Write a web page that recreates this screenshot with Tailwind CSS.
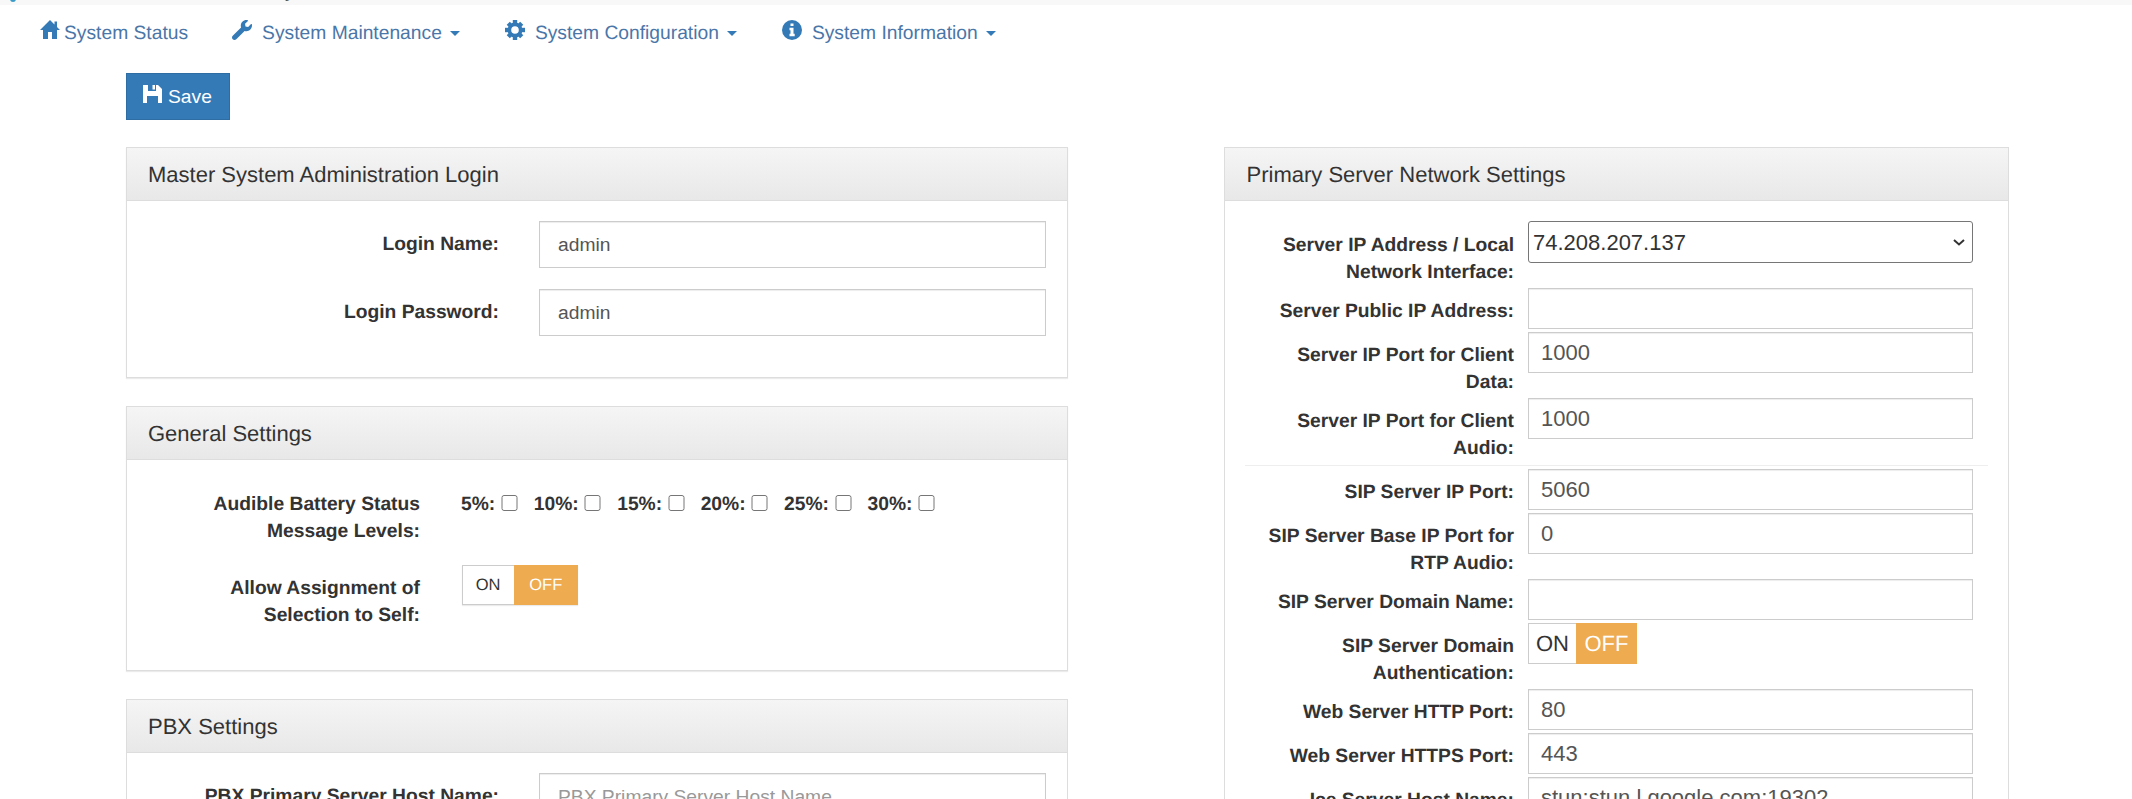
<!DOCTYPE html>
<html lang="en">
<head>
    <meta charset="UTF-8">
    <title>System Configuration</title>
    <script src="https://cdn.jsdelivr.net/npm/@tailwindcss/browser@4"></script>
</head>
<body class="h-screen overflow-hidden bg-white font-['Liberation_Sans',Arial,sans-serif] text-[19.25px] text-[#333] [text-rendering:geometricPrecision]">
    <!-- clipped top bar -->
    <div class="flex h-[5px] overflow-hidden bg-[#f8f8f8]">
        <span class="mt-[-5px] ml-[10px] h-[7px] w-[6px] rounded-full bg-[#3a9bc8]"></span>
        <span class="ml-[269px] mt-[-22px] leading-[27px] text-[#555]">y</span>
    </div>

    <!-- nav -->
    <nav class="flex h-[56px] items-center pl-[40px] text-[#4a76a8]">
        <a class="flex items-center">
            <svg class="mt-[-7px] h-[20px] w-[20px] fill-[#337ab7]" viewBox="0 0 20 20"><path d="M10 0 14.5 4.5V1.5H17V7L20 10H17V19H12V12H8V19H3V10H0Z"/></svg>
            <span class="mt-[2px] ml-[4px]">System Status</span>
        </a>
        <a class="ml-[44px] flex items-center">
            <svg class="mt-[-7px] h-[20px] w-[20px] fill-[#337ab7]" viewBox="0 0 512 512"><path d="M507.73 109.1c-2.24-9.03-13.54-12.09-20.12-5.51l-74.36 74.36-67.88-11.31-11.31-67.88 74.36-74.36c6.62-6.62 3.43-17.9-5.66-20.16-47.38-11.74-99.55.91-136.58 37.93-39.64 39.64-50.55 97.1-34.05 147.2L18.74 402.76c-24.99 24.99-24.99 65.51 0 90.5 24.99 24.99 65.51 24.99 90.5 0l213.21-213.21c50.12 16.71 107.47 5.68 147.37-34.22 37.07-37.07 49.7-89.32 37.91-136.73z"/></svg>
            <span class="mt-[2px] ml-[10px]">System Maintenance</span>
            <span class="ml-[8px] h-0 w-0 border-x-[5px] border-t-[5px] border-x-transparent border-t-[#337ab7]"></span>
        </a>
        <a class="ml-[45px] flex items-center">
            <svg class="mt-[-7px] h-[20px] w-[20px]" viewBox="0 0 20 20">
                <circle cx="10" cy="10" r="5.6" fill="none" stroke="#337ab7" stroke-width="3.6"/>
                <g fill="#337ab7">
                    <rect x="7.8" y="0" width="4.4" height="4"/><rect x="7.8" y="16" width="4.4" height="4"/>
                    <rect x="0" y="7.8" width="4" height="4.4"/><rect x="16" y="7.8" width="4" height="4.4"/>
                    <rect x="7.8" y="0.5" width="4.4" height="4" transform="rotate(45 10 10)"/><rect x="7.8" y="15.5" width="4.4" height="4" transform="rotate(45 10 10)"/>
                    <rect x="0.5" y="7.8" width="4" height="4.4" transform="rotate(45 10 10)"/><rect x="15.5" y="7.8" width="4" height="4.4" transform="rotate(45 10 10)"/>
                </g>
            </svg>
            <span class="mt-[2px] ml-[10px]">System Configuration</span>
            <span class="ml-[8px] h-0 w-0 border-x-[5px] border-t-[5px] border-x-transparent border-t-[#337ab7]"></span>
        </a>
        <a class="ml-[45px] flex items-center">
            <svg class="mt-[-7px] h-[20px] w-[20px]" viewBox="0 0 20 20">
                <circle cx="10" cy="10" r="10" fill="#337ab7"/>
                <path fill="#fff" d="M8.5 3.5h3v2.6h-3zM7.5 7.8h4v6h1.2v2.4H7.5v-2.4h1v-3.6h-1z"/>
            </svg>
            <span class="mt-[2px] ml-[10px]">System Information</span>
            <span class="ml-[8px] h-0 w-0 border-x-[5px] border-t-[5px] border-x-transparent border-t-[#337ab7]"></span>
        </a>
    </nav>

    <div class="pl-[126px]">
        <button class="mt-[12px] mb-[27px] flex h-[47px] w-[104px] items-center border border-[#2e6da4] bg-[#337ab7] pl-[16px] text-white">
            <svg class="mt-[-6px] h-[18px] w-[19px] fill-white" viewBox="0 0 19 18"><path fill-rule="evenodd" d="M0 0H5V6H13V0H15L19 4V18H0ZM4 11V18H15V11ZM9.5 0H12V4.5H9.5Z"/></svg>
            <span class="mt-[1px] ml-[6px]">Save</span>
        </button>

        <div class="flex items-start gap-[156px]">
            <!-- left column -->
            <div class="w-[942px]">
                <section class="mb-[28px] border border-[#ddd] shadow-[0_1px_1px_rgba(0,0,0,0.08)]">
                    <h3 class="flex h-[53px] items-center border-b border-[#ddd] bg-linear-to-b from-[#f5f5f5] to-[#e8e8e8] pl-[21px] text-[22px]">Master System Administration Login</h3>
                    <div class="px-[21px] pt-[20px] pb-[41px]">
                        <div class="mb-[21px] flex">
                            <label class="w-[351px] pt-[10px] text-right leading-[27px] font-bold">Login Name:</label>
                            <input class="ml-[40px] h-[47px] w-[507px] border border-[#ccc] px-[18px] pt-[1px] text-[#555] shadow-[inset_0_1px_1px_rgba(0,0,0,0.075)]" value="admin">
                        </div>
                        <div class="flex">
                            <label class="w-[351px] pt-[10px] text-right leading-[27px] font-bold">Login Password:</label>
                            <input class="ml-[40px] h-[47px] w-[507px] border border-[#ccc] px-[18px] pt-[1px] text-[#555] shadow-[inset_0_1px_1px_rgba(0,0,0,0.075)]" value="admin">
                        </div>
                    </div>
                </section>

                <section class="mb-[28px] border border-[#ddd] shadow-[0_1px_1px_rgba(0,0,0,0.08)]">
                    <h3 class="flex h-[53px] items-center border-b border-[#ddd] bg-linear-to-b from-[#f5f5f5] to-[#e8e8e8] pl-[21px] text-[22px]">General Settings</h3>
                    <div class="pt-[31px] pb-[41px] pl-[21px]">
                        <div class="mb-[20px] flex">
                            <label class="w-[272px] text-right leading-[27px] font-bold">Audible Battery Status Message Levels:</label>
                            <div class="ml-[41px] flex leading-[27px] font-bold">
                                <label class="flex items-start">5%:<input type="checkbox" class="mt-[4px] ml-[5.5px] h-[16px] w-[17px]"></label>
                                <label class="ml-[16px] flex items-start">10%:<input type="checkbox" class="mt-[4px] ml-[5.5px] h-[16px] w-[17px]"></label>
                                <label class="ml-[16px] flex items-start">15%:<input type="checkbox" class="mt-[4px] ml-[5.5px] h-[16px] w-[17px]"></label>
                                <label class="ml-[16px] flex items-start">20%:<input type="checkbox" class="mt-[4px] ml-[5.5px] h-[16px] w-[17px]"></label>
                                <label class="ml-[16px] flex items-start">25%:<input type="checkbox" class="mt-[4px] ml-[5.5px] h-[16px] w-[17px]"></label>
                                <label class="ml-[16px] flex items-start">30%:<input type="checkbox" class="mt-[4px] ml-[5.5px] h-[16px] w-[17px]"></label>
                            </div>
                        </div>
                        <div class="flex">
                            <label class="w-[272px] pt-[10px] text-right leading-[27px] font-bold">Allow Assignment of Selection to Self:</label>
                            <div class="ml-[41.5px] flex h-[40px] text-[16.5px] shadow-[0_1px_1px_rgba(0,0,0,0.08)]">
                                <span class="flex w-[52px] items-center justify-center border border-r-0 border-[#ccc] bg-white">ON</span>
                                <span class="flex w-[64.5px] items-center justify-center bg-[#eeab4f] text-white">OFF</span>
                            </div>
                        </div>
                    </div>
                </section>

                <section class="border border-[#ddd]">
                    <h3 class="flex h-[53px] items-center border-b border-[#ddd] bg-linear-to-b from-[#f5f5f5] to-[#e8e8e8] pl-[21px] text-[22px]">PBX Settings</h3>
                    <div class="px-[21px] pt-[20px] pb-[41px]">
                        <div class="flex">
                            <label class="w-[351px] pt-[10px] text-right leading-[27px] font-bold">PBX Primary Server Host Name:</label>
                            <input class="ml-[40px] h-[47px] w-[507px] border border-[#ccc] px-[18px] pt-[1px] text-[#555] shadow-[inset_0_1px_1px_rgba(0,0,0,0.075)] placeholder:text-[#999]" placeholder="PBX Primary Server Host Name">
                        </div>
                    </div>
                </section>
            </div>

            <!-- right column -->
            <section class="w-[785px] border border-[#ddd]">
                <h3 class="flex h-[53px] items-center border-b border-[#ddd] bg-linear-to-b from-[#f5f5f5] to-[#e8e8e8] pl-[21.5px] text-[22px]">Primary Server Network Settings</h3>
                <div class="flex flex-col items-start gap-[3px] pt-[20px]">
                    <div class="flex">
                        <label class="mb-[-1px] w-[289px] pt-[11px] text-right leading-[27px] font-bold">Server IP Address / Local<br>Network Interface:</label>
                        <div class="relative ml-[14px] h-[42px] w-[445px]">
                            <select class="h-full w-full appearance-none rounded-[3px] border border-[#767676] pl-[4px] text-[22px] text-[#333]"><option>74.208.207.137</option></select>
                            <svg class="pointer-events-none absolute top-[18px] right-[8px] h-[7px] w-[12px]" viewBox="0 0 12 7"><path d="M1 1 6 5.5 11 1" fill="none" stroke="#333" stroke-width="2"/></svg>
                        </div>
                    </div>
                    <div class="flex items-start">
                        <label class="w-[289px] pt-[10px] text-right leading-[27px] font-bold">Server Public IP Address:</label>
                        <input class="ml-[14px] h-[41px] w-[445px] border border-[#ccc] px-[12px] pt-[1px] text-[22px] text-[#555] shadow-[inset_0_1px_1px_rgba(0,0,0,0.075)]">
                    </div>
                    <div class="flex items-start">
                        <label class="mb-[-1px] w-[289px] pt-[10px] text-right leading-[27px] font-bold">Server IP Port for Client<br>Data:</label>
                        <input class="ml-[14px] h-[41px] w-[445px] border border-[#ccc] px-[12px] pt-[1px] text-[22px] text-[#555] shadow-[inset_0_1px_1px_rgba(0,0,0,0.075)]" value="1000">
                    </div>
                    <div class="flex items-start">
                        <label class="mb-[-1px] w-[289px] pt-[10px] text-right leading-[27px] font-bold">Server IP Port for Client<br>Audio:</label>
                        <input class="ml-[14px] h-[41px] w-[445px] border border-[#ccc] px-[12px] pt-[1px] text-[22px] text-[#555] shadow-[inset_0_1px_1px_rgba(0,0,0,0.075)]" value="1000">
                    </div>
                    <hr class="mt-[1px] ml-[20px] w-[743px] border-[#eee]">
                    <div class="flex items-start">
                        <label class="w-[289px] pt-[10px] text-right leading-[27px] font-bold">SIP Server IP Port:</label>
                        <input class="ml-[14px] h-[41px] w-[445px] border border-[#ccc] px-[12px] pt-[1px] text-[22px] text-[#555] shadow-[inset_0_1px_1px_rgba(0,0,0,0.075)]" value="5060">
                    </div>
                    <div class="flex items-start">
                        <label class="mb-[-1px] w-[289px] pt-[10px] text-right leading-[27px] font-bold">SIP Server Base IP Port for<br>RTP Audio:</label>
                        <input class="ml-[14px] h-[41px] w-[445px] border border-[#ccc] px-[12px] pt-[1px] text-[22px] text-[#555] shadow-[inset_0_1px_1px_rgba(0,0,0,0.075)]" value="0">
                    </div>
                    <div class="flex items-start">
                        <label class="w-[289px] pt-[10px] text-right leading-[27px] font-bold">SIP Server Domain Name:</label>
                        <input class="ml-[14px] h-[41px] w-[445px] border border-[#ccc] px-[12px] pt-[1px] text-[22px] text-[#555] shadow-[inset_0_1px_1px_rgba(0,0,0,0.075)]">
                    </div>
                    <div class="flex items-start">
                        <label class="mb-[-1px] w-[289px] pt-[10px] text-right leading-[27px] font-bold">SIP Server Domain<br>Authentication:</label>
                        <div class="ml-[14px] flex h-[41px] text-[22px]">
                            <span class="flex w-[48px] items-center justify-center border border-r-0 border-[#ccc] bg-white">ON</span>
                            <span class="flex w-[61px] items-center justify-center bg-[#eeab4f] text-white">OFF</span>
                        </div>
                    </div>
                    <div class="flex items-start">
                        <label class="w-[289px] pt-[10px] text-right leading-[27px] font-bold">Web Server HTTP Port:</label>
                        <input class="ml-[14px] h-[41px] w-[445px] border border-[#ccc] px-[12px] pt-[1px] text-[22px] text-[#555] shadow-[inset_0_1px_1px_rgba(0,0,0,0.075)]" value="80">
                    </div>
                    <div class="flex items-start">
                        <label class="w-[289px] pt-[10px] text-right leading-[27px] font-bold">Web Server HTTPS Port:</label>
                        <input class="ml-[14px] h-[41px] w-[445px] border border-[#ccc] px-[12px] pt-[1px] text-[22px] text-[#555] shadow-[inset_0_1px_1px_rgba(0,0,0,0.075)]" value="443">
                    </div>
                    <div class="flex items-start">
                        <label class="w-[289px] pt-[10px] text-right leading-[27px] font-bold">Ice Server Host Name:</label>
                        <input class="ml-[14px] h-[41px] w-[445px] border border-[#ccc] px-[12px] pt-[1px] text-[22px] text-[#555] shadow-[inset_0_1px_1px_rgba(0,0,0,0.075)]" value="stun:stun.l.google.com:19302">
                    </div>
                </div>
            </section>
        </div>
    </div>
</body>
</html>
